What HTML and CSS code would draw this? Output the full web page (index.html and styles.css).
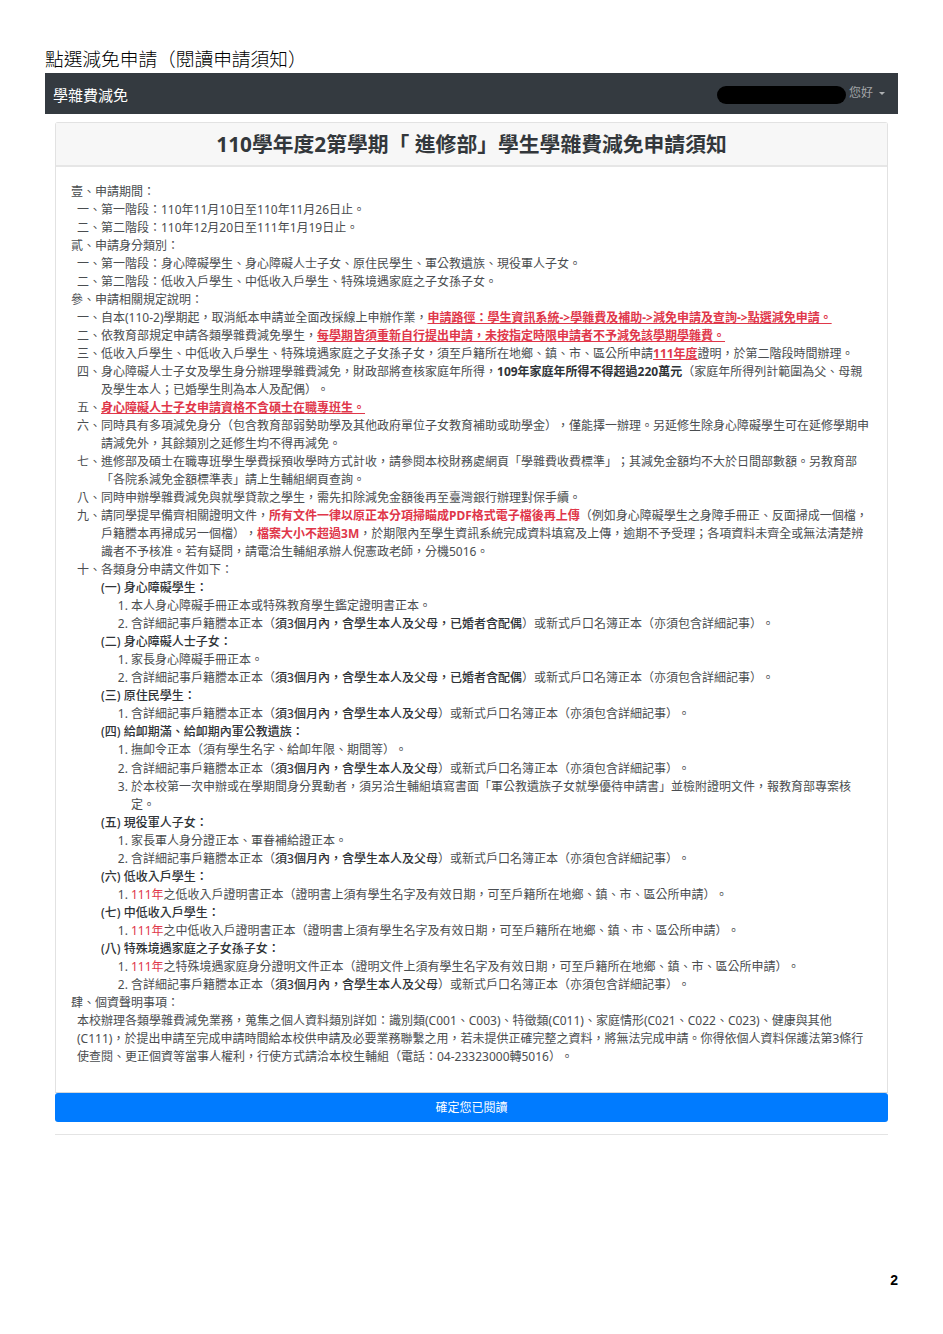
FILE: index.html
```html
<!DOCTYPE html>
<html lang="zh-Hant">
<head>
<meta charset="utf-8">
<title>點選減免申請</title>
<link rel="stylesheet" href="styles.css">
</head>
<body>
<main class="page">
  <h1 class="doc-title">點選減免申請（閱讀申請須知）</h1>
  <nav class="navbar">
    <a class="brand">學雜費減免</a>
    <div class="nav-user">
      <span class="redact"></span>
      <span class="hello">您好</span>
      <span class="caret"></span>
    </div>
  </nav>
  <div class="content">
    <section class="card">
      <h2 class="card-header">110學年度2第學期「 進修部」學生學雜費減免申請須知</h2>
      <div class="card-body">
        <div class="sec">壹、申請期間：</div>
        <div class="item"><span class="lab">一、</span><div>第一階段：110年11月10日至110年11月26日止。</div></div>
        <div class="item"><span class="lab">二、</span><div>第二階段：110年12月20日至111年1月19日止。</div></div>
        <div class="sec">貳、申請身分類別：</div>
        <div class="item"><span class="lab">一、</span><div>第一階段：身心障礙學生、身心障礙人士子女、原住民學生、軍公教遺族、現役軍人子女。</div></div>
        <div class="item"><span class="lab">二、</span><div>第二階段：低收入戶學生、中低收入戶學生、特殊境遇家庭之子女孫子女。</div></div>
        <div class="sec">參、申請相關規定說明：</div>
        <div class="item"><span class="lab">一、</span><div>自本(110-2)學期起，取消紙本申請並全面改採線上申辦作業，<b class="red u">申請路徑：學生資訊系統-&gt;學雜費及補助-&gt;減免申請及查詢-&gt;點選減免申請。</b></div></div>
        <div class="item"><span class="lab">二、</span><div>依教育部規定申請各類學雜費減免學生，<b class="red u">每學期皆須重新自行提出申請，未按指定時限申請者不予減免該學期學雜費。</b></div></div>
        <div class="item"><span class="lab">三、</span><div>低收入戶學生、中低收入戶學生、特殊境遇家庭之子女孫子女，須至戶籍所在地鄉、鎮、市、區公所申請<b class="red u">111年度</b>證明，於第二階段時間辦理。</div></div>
        <div class="item"><span class="lab">四、</span><div>身心障礙人士子女及學生身分辦理學雜費減免，財政部將查核家庭年所得，<b>109年家庭年所得不得超過220萬元</b>（家庭年所得列計範圍為父、母親及學生本人；已婚學生則為本人及配偶）。</div></div>
        <div class="item"><span class="lab">五、</span><div><b class="red u">身心障礙人士子女申請資格不含碩士在職專班生。</b></div></div>
        <div class="item"><span class="lab">六、</span><div>同時具有多項減免身分（包含教育部弱勢助學及其他政府單位子女教育補助或助學金），僅能擇一辦理。另延修生除身心障礙學生可在延修學期申請減免外，其餘類別之延修生均不得再減免。</div></div>
        <div class="item"><span class="lab">七、</span><div>進修部及碩士在職專班學生學費採預收學時方式計收，請參閱本校財務處網頁「學雜費收費標準」；其減免金額均不大於日間部數額。另教育部「各院系減免金額標準表」請上生輔組網頁查詢。</div></div>
        <div class="item"><span class="lab">八、</span><div>同時申辦學雜費減免與就學貸款之學生，需先扣除減免金額後再至臺灣銀行辦理對保手續。</div></div>
        <div class="item"><span class="lab">九、</span><div>請同學提早備齊相關證明文件，<b class="red">所有文件一律以原正本分項掃瞄成PDF格式電子檔後再上傳</b>（例如身心障礙學生之身障手冊正、反面掃成一個檔，戶籍謄本再掃成另一個檔），<b class="red">檔案大小不超過3M</b>，於期限內至學生資訊系統完成資料填寫及上傳，逾期不予受理；各項資料未齊全或無法清楚辨識者不予核准。若有疑問，請電洽生輔組承辦人倪憲政老師，分機5016。</div></div>
        <div class="item"><span class="lab">十、</span><div>各類身分申請文件如下：</div></div>

        <div class="group"><b>(一)</b> <b>身心障礙學生：</b></div>
        <ol class="docs">
          <li>本人身心障礙手冊正本或特殊教育學生鑑定證明書正本。</li>
          <li>含詳細記事戶籍謄本正本（<b>須3個月內，含學生本人及父母，已婚者含配偶</b>）或新式戶口名簿正本（亦須包含詳細記事）。</li>
        </ol>
        <div class="group"><b>(二)</b> <b>身心障礙人士子女：</b></div>
        <ol class="docs">
          <li>家長身心障礙手冊正本。</li>
          <li>含詳細記事戶籍謄本正本（<b>須3個月內，含學生本人及父母，已婚者含配偶</b>）或新式戶口名簿正本（亦須包含詳細記事）。</li>
        </ol>
        <div class="group"><b>(三)</b> <b>原住民學生：</b></div>
        <ol class="docs">
          <li>含詳細記事戶籍謄本正本（<b>須3個月內，含學生本人及父母</b>）或新式戶口名簿正本（亦須包含詳細記事）。</li>
        </ol>
        <div class="group"><b>(四)</b> <b>給卹期滿、給卹期內軍公教遺族：</b></div>
        <ol class="docs">
          <li>撫卹令正本（須有學生名字、給卹年限、期間等）。</li>
          <li>含詳細記事戶籍謄本正本（<b>須3個月內，含學生本人及父母</b>）或新式戶口名簿正本（亦須包含詳細記事）。</li>
          <li>於本校第一次申辦或在學期間身分異動者，須另洽生輔組填寫書面「軍公教遺族子女就學優待申請書」並檢附證明文件，報教育部專案核定。</li>
        </ol>
        <div class="group"><b>(五)</b> <b>現役軍人子女：</b></div>
        <ol class="docs">
          <li>家長軍人身分證正本、軍眷補給證正本。</li>
          <li>含詳細記事戶籍謄本正本（<b>須3個月內，含學生本人及父母</b>）或新式戶口名簿正本（亦須包含詳細記事）。</li>
        </ol>
        <div class="group"><b>(六)</b> <b>低收入戶學生：</b></div>
        <ol class="docs">
          <li><span class="red">111年</span>之低收入戶證明書正本（證明書上須有學生名字及有效日期，可至戶籍所在地鄉、鎮、市、區公所申請）。</li>
        </ol>
        <div class="group"><b>(七)</b> <b>中低收入戶學生：</b></div>
        <ol class="docs">
          <li><span class="red">111年</span>之中低收入戶證明書正本（證明書上須有學生名字及有效日期，可至戶籍所在地鄉、鎮、市、區公所申請）。</li>
        </ol>
        <div class="group"><b>(八)</b> <b>特殊境遇家庭之子女孫子女：</b></div>
        <ol class="docs">
          <li><span class="red">111年</span>之特殊境遇家庭身分證明文件正本（證明文件上須有學生名字及有效日期，可至戶籍所在地鄉、鎮、市、區公所申請）。</li>
          <li>含詳細記事戶籍謄本正本（<b>須3個月內，含學生本人及父母</b>）或新式戶口名簿正本（亦須包含詳細記事）。</li>
        </ol>

        <div class="sec">肆、個資聲明事項：</div>
        <p class="notice">本校辦理各類學雜費減免業務，蒐集之個人資料類別詳如：識別類(C001、C003)、特徵類(C011)、家庭情形(C021、C022、C023)、健康與其他(C111)，於提出申請至完成申請時間給本校供申請及必要業務聯繫之用，若未提供正確完整之資料，將無法完成申請。你得依個人資料保護法第3條行使查閱、更正個資等當事人權利，行使方式請洽本校生輔組（電話：04-23323000轉5016）。</p>
      </div>
    </section>
    <button class="confirm" type="button">確定您已閱讀</button>
    <hr class="rule">
  </div>
  <div class="page-no">2</div>
</main>
</body>
</html>
```
FILE: styles.css
```css
* { box-sizing: border-box; }
html, body { margin: 0; padding: 0; background: #fff; }
body {
  font-family: "Noto Sans", "Noto Sans CJK TC", sans-serif;
  font-size: 12px;
  line-height: 18.02px;
  color: #4a4d50;
  text-spacing-trim: space-all;
  font-kerning: none;
}
.page { width: 943px; height: 1334px; padding: 51px 45px 0; }
.doc-title {
  margin: 0 0 8px;
  font-family: "Noto Sans CJK TC", sans-serif;
  font-size: 18.7px;
  line-height: 14px;
  height: 14px;
  font-weight: 300;
  color: #000;
}
.navbar {
  height: 41px;
  background: #343a40;
  display: flex;
  align-items: center;
  justify-content: space-between;
  padding: 3px 13px 0 8px;
}
.brand { color: #fff; font-size: 15px; }
.nav-user { display: flex; align-items: center; color: rgba(255,255,255,.55); }
.redact { width: 129px; height: 18px; border-radius: 9px; background: #000; margin-right: 3px; }
.hello { margin-bottom: 3px; }
.caret {
  width: 0; height: 0; margin: 0 0 3px 6px;
  border-top: 3px solid rgba(255,255,255,.6);
  border-left: 3px solid transparent;
  border-right: 3px solid transparent;
}
.content { padding: 8px 10px 0; }
.card {
  border: 1px solid #e2e2e2;
  border-bottom-color: #d4d8dc;
  border-radius: 3px 3px 0 0;
  background: #fff;
}
.card-header {
  margin: 0;
  height: 44px;
  background: #f7f7f7;
  border-bottom: 2px solid #e6e6e6;
  text-align: center;
  font-size: 20.8px;
  line-height: 42px;
  font-weight: 700;
  color: #33373b;
}
.card-body { padding: 16px 15px 26px; }
.item { display: flex; margin-left: 6px; }
.item > div { flex: 1; min-width: 0; }
.lab { flex: 0 0 24px; width: 24px; }
.group { margin-left: 30px; }
b { font-weight: 500; }
.group b, .docs b { color: #2f3337; }
.item > div > b { color: #2f3337; font-weight: 700; }
.docs { margin: 0; padding: 0 0 0 60px; }
.notice { margin: 0 0 0 6px; }
.red, .item > div > b.red { color: #e0374a; }
.u { text-decoration: underline; }
.confirm {
  display: block;
  width: 100%;
  height: 29px;
  padding: 0;
  border: 0;
  border-radius: 3px;
  background: #007bff;
  color: #fff;
  font: inherit;
  line-height: 29px;
}
.rule { margin: 12px 0 0; border: 0; border-top: 1px solid #e4e4e4; }
.page-no {
  margin-top: 136px;
  text-align: right;
  font-family: "Liberation Sans", sans-serif;
  font-size: 14px;
  font-weight: 700;
  color: #000;
}
```
